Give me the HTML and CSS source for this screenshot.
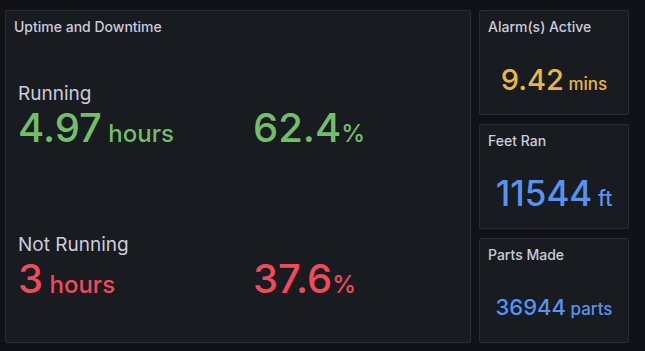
FILE: index.html
```html
<!DOCTYPE html>
<html>
<head>
  <title>Machine Stats</title>
  <link rel="stylesheet" href="styles.css">
</head>
<body>
  <div class="dash">
    <section class="panel panel-main">
      <h3 class="panel-title">Uptime and Downtime</h3>
      <div class="stat-grid">
        <div class="cell">
          <div class="label">Running</div>
          <div class="value green">4.97<span class="unit"> hours</span></div>
        </div>
        <div class="cell">
          <div class="value green">62.4<span class="unit">%</span></div>
        </div>
        <div class="cell">
          <div class="label">Not Running</div>
          <div class="value red">3<span class="unit"> hours</span></div>
        </div>
        <div class="cell">
          <div class="value red">37.6<span class="unit">%</span></div>
        </div>
      </div>
    </section>

    <div class="side">
      <section class="panel">
        <h3 class="panel-title">Alarm(s) Active</h3>
        <div class="single">
          <div class="big yellow alarm">9.42<span class="unit"> mins</span></div>
        </div>
      </section>
      <section class="panel">
        <h3 class="panel-title">Feet Ran</h3>
        <div class="single">
          <div class="big blue feet">11544<span class="unit"> ft</span></div>
        </div>
      </section>
      <section class="panel">
        <h3 class="panel-title">Parts Made</h3>
        <div class="single">
          <div class="big blue parts">36944<span class="unit"> parts</span></div>
        </div>
      </section>
    </div>
  </div>
</body>
</html>
```

FILE: styles.css
```css
body {
  font-family: 'Inter', 'Noto Sans', sans-serif;
  margin: 0;
  padding: 0;
  background: #111217;
  color: #ccccdc;
}
.dash {
  display: grid;
  grid-template-columns: 466px 150px;
  gap: 8px;
  padding: 10px 5px;
  height: 333px;
}
.panel {
  background: #181b1f;
  border: 1px solid #2a2c31;
  border-radius: 2px;
  display: flex;
  flex-direction: column;
  min-height: 0;
}
.panel-title {
  margin: 0;
  padding: 8px 8px 0 8px;
  font-size: 14px;
  line-height: 16px;
  font-weight: 500;
  color: #ccccdc;
}
.side {
  display: grid;
  grid-template-rows: repeat(3, 1fr);
  gap: 9px;
}

/* big panel */
.stat-grid {
  display: grid;
  grid-template-columns: 235px 1fr;
  grid-auto-rows: 68px;
  row-gap: 83px;
  padding: 53px 0 0 12px;
}
.cell {
  display: flex;
  flex-direction: column;
  justify-content: flex-end;
}
.label {
  font-size: 19px;
  line-height: 24px;
  color: #ccccdc;
}
.value {
  font-size: 40px;
  line-height: 44px;
  font-weight: 500;
  white-space: nowrap;
}
.value .unit {
  font-size: 24px;
}

/* small stat panels */
.single {
  flex: 1;
  display: flex;
  align-items: center;
  justify-content: center;
  padding-top: 9px;
}
.big {
  font-weight: 500;
  line-height: 1;
  white-space: nowrap;
}
.alarm { font-size: 29px; }
.alarm .unit { font-size: 17px; }
.feet { font-size: 35px; }
.feet .unit { font-size: 21px; }
.parts { font-size: 22px; }
.parts .unit { font-size: 17px; }

.green { color: #73bf69; }
.red { color: #f2495c; }
.yellow { color: #eab839; }
.blue { color: #5794f2; }
```
